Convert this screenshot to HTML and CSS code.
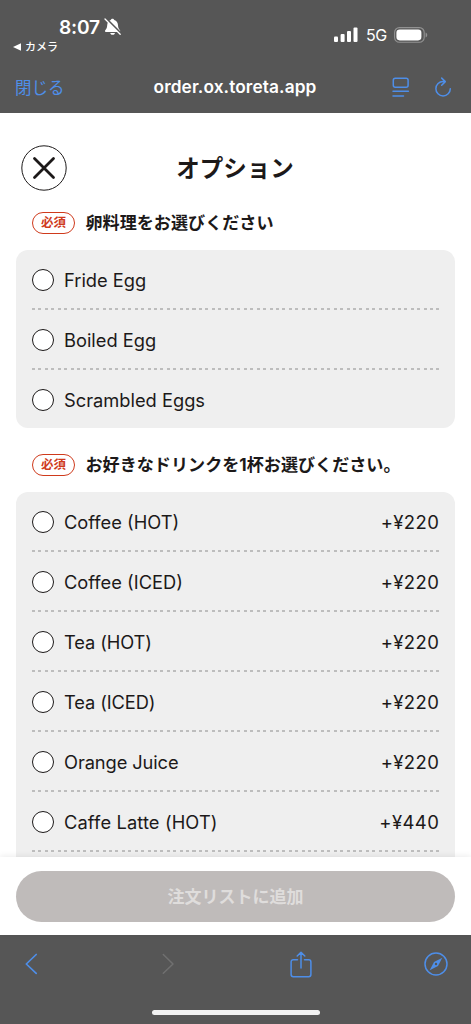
FILE: index.html
```html
<!DOCTYPE html>
<html lang="ja">
<head>
<meta charset="utf-8">
<meta name="viewport" content="width=device-width, initial-scale=1">
<title>オプション</title>
<link rel="stylesheet" href="styles.css">
</head>
<body>
<div class="screen">
  <header class="top">
    <div class="status">
      <div class="status-left">
        <div class="clock"><span class="time">8:07</span>
          <svg width="18" height="18" viewBox="0 0 18 18"><path d="M8.500.8c1 0 1.600.6 1.700 1.300 2.500.7 3.700 2.700 3.800 5.200.1 2.700.9 3.800 1.900 4.900.7.800.3 1.700-.7 1.700H2c-1 0-1.400-.9-.7-1.700 1-1.100 1.800-2.200 1.900-4.900.1-2.500 1.200-4.500 3.600-5.200C6.900 1.400 7.500.8 8.500.8zM6.200 14.900h4.800c-.3 1.200-1.300 1.900-2.400 1.900s-2.100-.7-2.400-1.900z" fill="#fff"/><path d="M2.200.8l14.800 14.800" stroke="#565656" stroke-width="2.200"/><path d="M1 1l15.200 15.200" stroke="#fff" stroke-width="1.300" stroke-linecap="round"/></svg>
        </div>
        <div class="return"><svg width="8" height="8" viewBox="0 0 8 8"><path d="M0 4L8 .3v7.400z" fill="#fff"/></svg><span>カメラ</span></div>
      </div>
      <div class="status-right">
        <svg width="24" height="16" viewBox="0 0 24 16" fill="#fff"><rect x="0" y="9.500" width="4" height="5.500" rx="1"/><rect x="6.600" y="7" width="4" height="8" rx="1"/><rect x="13" y="4" width="4" height="11" rx="1"/><rect x="19.500" y=".5" width="4" height="14.500" rx="1"/></svg>
        <span class="network">5G</span>
        <svg class="battery" width="34" height="16" viewBox="0 0 34 16"><rect x=".6" y=".6" width="29.600" height="14.600" rx="4.800" fill="none" stroke="#929292" stroke-width="1.100"/><rect x="2.400" y="2.400" width="25" height="11" rx="3.300" fill="#fff"/><path d="M31.600 5.400c2.200.8 2.200 4.200 0 5z" fill="#929292"/></svg>
      </div>
    </div>
    <div class="address">
      <span class="done">閉じる</span>
      <span class="domain">order.ox.toreta.app</span>
      <span class="tools">
        <svg width="18" height="21" viewBox="0 0 18 21" fill="none" stroke="#4e8ee8" stroke-width="1.500" stroke-linecap="round"><rect x="1.300" y="1.300" width="14.800" height="9" rx="2"/><path d="M1 14.300h15.400M1 19h10.500"/></svg>
        <svg width="18" height="21" viewBox="0 0 18 21" fill="none" stroke="#4e8ee8" stroke-width="1.500" stroke-linecap="round" stroke-linejoin="round"><path d="M9.200 4.500A7.200 7.200 0 1 0 16.300 11.700M7.700 1.100L11.300 4.600 7.700 8.200M9.200 4.500h2"/></svg>
      </span>
    </div>
  </header>

  <main class="content">
    <div class="title-row">
      <span class="close"><svg width="46" height="46" viewBox="0 0 46 46" fill="none" stroke="#1c1919"><circle cx="23" cy="23" r="22.200"/><path d="M13.500 13.500l19 19M32.500 13.500l-19 19" stroke-width="2.800" stroke-linecap="round"/></svg></span>
      <h1 class="title">オプション</h1>
    </div>

    <section class="group">
      <h2 class="group-head"><span class="badge">必須</span><span class="question">卵料理をお選びください</span></h2>
      <ul class="card">
        <li class="row"><i class="radio"></i><span class="name">Fride Egg</span></li>
        <li class="row"><i class="radio"></i><span class="name">Boiled Egg</span></li>
        <li class="row"><i class="radio"></i><span class="name">Scrambled Eggs</span></li>
      </ul>
    </section>

    <section class="group">
      <h2 class="group-head"><span class="badge">必須</span><span class="question">お好きなドリンクを1杯お選びください。</span></h2>
      <ul class="card card-long">
        <li class="row"><i class="radio"></i><span class="name">Coffee (HOT)</span><span class="price">+¥220</span></li>
        <li class="row"><i class="radio"></i><span class="name">Coffee (ICED)</span><span class="price">+¥220</span></li>
        <li class="row"><i class="radio"></i><span class="name tight">Tea (HOT)</span><span class="price">+¥220</span></li>
        <li class="row"><i class="radio"></i><span class="name tight">Tea (ICED)</span><span class="price">+¥220</span></li>
        <li class="row"><i class="radio"></i><span class="name tight">Orange Juice</span><span class="price">+¥220</span></li>
        <li class="row"><i class="radio"></i><span class="name wide">Caffe Latte (HOT)</span><span class="price">+¥440</span></li>
      </ul>
    </section>
  </main>

  <div class="action"><button class="add" disabled>注文リストに追加</button></div>

  <footer class="bottom">
    <nav class="nav">
      <svg width="13" height="22" viewBox="0 0 13 22" fill="none" stroke="#4e8ee8" stroke-width="1.700" stroke-linecap="round" stroke-linejoin="round"><path d="M11.200 1.500L1.300 11l9.900 9.300"/></svg>
      <svg class="forward" width="13" height="22" viewBox="0 0 13 22" fill="none" stroke="#707070" stroke-width="1.500" stroke-linecap="round" stroke-linejoin="round"><path d="M1.300 1.500L11 11l-9.700 9.300"/></svg>
      <svg class="share" width="22" height="27" viewBox="0 0 22 27" fill="none" stroke="#4e8ee8" stroke-width="1.500" stroke-linecap="round" stroke-linejoin="round"><path d="M7.500 8.700H3.300a2.200 2.200 0 0 0-2.200 2.200v12.600a2.200 2.200 0 0 0 2.200 2.200h15.400a2.200 2.200 0 0 0 2.200-2.200V10.900a2.200 2.200 0 0 0-2.200-2.200h-4.200M11 17V1.300M7.200 5L11 1.200 14.800 5"/></svg>
      <svg class="compass" width="24" height="24" viewBox="0 0 24 24"><circle cx="12" cy="12" r="11" fill="none" stroke="#4e8ee8" stroke-width="1.500"/><path d="M18.300 5.700l-4.300 8.300-8.300 4.300 4.300-8.300z" fill="#4e8ee8"/><circle cx="12" cy="12" r="1.200" fill="#565656"/></svg>
    </nav>
    <div class="home"></div>
  </footer>
</div>
</body>
</html>
```
FILE: styles.css
```css
* { box-sizing: border-box; }
body {
  margin: 0;
  background: #fff;
  color: #1c1919;
  font-family: Inter, "Noto Sans CJK JP", sans-serif;
}
svg { display: block; flex: none; }
.screen {
  width: 471px;
  height: 1024px;
  display: flex;
  flex-direction: column;
  overflow: hidden;
}

/* Browser chrome, top */
.top {
  height: 113px;
  flex: none;
  background: #565656;
  color: #fff;
}
.status {
  height: 62px;
  display: flex;
  justify-content: space-between;
  padding: 15px 43px 0 13px;
}
.clock {
  display: flex;
  align-items: center;
  gap: 4px;
  height: 24px;
  padding-left: 46px;
}
.time { width: 41px; font-size: 19.2px; font-weight: 600; letter-spacing: -0.2px; }
.return {
  display: flex;
  align-items: center;
  gap: 4px;
  height: 16px;
  font-size: 11px;
  font-weight: 500;
}
.return span { padding-bottom: 2px; }
.status-right {
  display: flex;
  align-items: center;
  height: 40px;
}
.network { width: 28px; margin-left: 8px; font-size: 16px; letter-spacing: -0.4px; }
.address {
  height: 50px;
  display: grid;
  grid-template-columns: 111px 1fr 109px;
  align-items: center;
  padding: 0 19px 0 15px;
}
.done { color: #4e8ee8; font-size: 16.5px; }
.domain {
  padding: 0 0 2px 1px;
  font-size: 17.3px;
  font-weight: 600;
  letter-spacing: 0.1px;
  text-align: center;
  white-space: nowrap;
}
.tools { display: flex; justify-content: flex-end; gap: 24px; }

/* Options */
.content {
  height: 744px;
  flex: none;
  overflow: hidden;
  padding: 32px 16px 0;
}
.title-row {
  display: grid;
  grid-template-columns: 56px 1fr 56px;
  align-items: center;
  height: 46px;
  padding: 0 6px 0 5px;
}
.title {
  margin: 0;
  padding-top: 2px;
  font-size: 23.5px;
  font-weight: 700;
  line-height: 44px;
  text-align: center;
}
.group-head {
  display: flex;
  align-items: center;
  gap: 10.5px;
  height: 22px;
  margin: 21px 16px 16px;
  font-size: 17.1px;
}
.group + .group .group-head { margin-top: 26px; }
.badge {
  width: 43px;
  height: 22px;
  border: 1px solid #cf3a1c;
  border-radius: 11px;
  color: #cf3a1c;
  font-size: 12.5px;
  line-height: 19px;
  text-align: center;
}
.question { line-height: 22px; white-space: nowrap; }
.card {
  height: 178px;
  margin: 0;
  padding: 0 16px;
  border-radius: 12px;
  background: #efefef;
  list-style: none;
}
.card-long { height: 420px; }
.row {
  display: flex;
  align-items: center;
  height: 60px;
  background: repeating-linear-gradient(90deg, #bdbdbd 0 3px, transparent 3px 6.42px) 0 57.5px / 100% 2px no-repeat;
}
.card:not(.card-long) .row:last-child { background: none; }
.radio {
  width: 22px;
  height: 22px;
  margin-right: 10px;
  border: 1px solid #1c1919;
  border-radius: 50%;
  background: #fff;
}
.name { font-size: 18.3px; }
.tight { letter-spacing: -0.1px; }
.wide { letter-spacing: 0.12px; }
.price { margin-left: auto; margin-right: -0.3px; font-size: 18.5px; letter-spacing: 0.4px; }

/* Add to order bar */
.action {
  position: relative;
  height: 78px;
  flex: none;
  padding: 14px 16px 0;
  background: #fff;
  box-shadow: 0 -1px 6px rgba(0, 0, 0, 0.08);
}
.add {
  width: 100%;
  height: 51px;
  padding: 0 0 2px;
  border: 0;
  border-radius: 26px;
  background: #bfbbba;
  color: #dfdddc;
  font: 700 17px "Noto Sans CJK JP", sans-serif;
}

/* Browser chrome, bottom */
.bottom {
  flex: 1;
  background: #565656;
}
.nav {
  display: flex;
  align-items: center;
  height: 58px;
  padding: 0 23px 0 25px;
}
.forward { margin-left: 124px; }
.share { margin-left: 115px; }
.compass { margin-left: auto; }
.home {
  width: 168px;
  height: 5px;
  margin: 17px auto 0;
  border-radius: 3px;
  background: #f1f1f1;
}
```
